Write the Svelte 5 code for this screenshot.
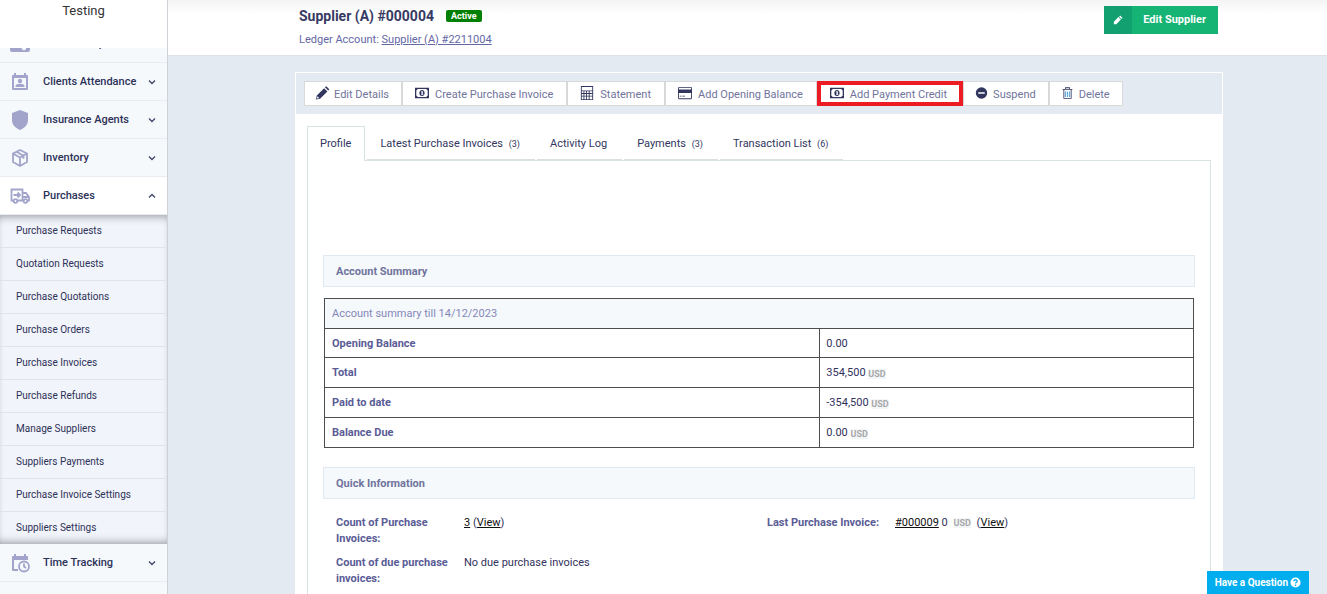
<script>
  let activeTab = $state('Profile');
  let openMenu = $state('Purchases');

  const menu = [
    { name: 'Memberships', icon: 'card', cut: true },
    { name: 'Clients Attendance', icon: 'attendance' },
    { name: 'Insurance Agents', icon: 'shield' },
    { name: 'Inventory', icon: 'box' },
    {
      name: 'Purchases',
      icon: 'truck',
      links: [
        'Purchase Requests',
        'Quotation Requests',
        'Purchase Quotations',
        'Purchase Orders',
        'Purchase Invoices',
        'Purchase Refunds',
        'Manage Suppliers',
        'Suppliers Payments',
        'Purchase Invoice Settings',
        'Suppliers Settings'
      ]
    },
    { name: 'Time Tracking', icon: 'calendar' }
  ];

  const actions = [
    { name: 'Edit Details', icon: 'pencil' },
    { name: 'Create Purchase Invoice', icon: 'money', wide: true },
    { name: 'Statement', icon: 'calc', wide: true },
    { name: 'Add Opening Balance', icon: 'credit', wide: true },
    { name: 'Add Payment Credit', icon: 'money', wide: true, marked: true },
    { name: 'Suspend', icon: 'minus' },
    { name: 'Delete', icon: 'trash' }
  ];

  const tabs = [
    { name: 'Profile' },
    { name: 'Latest Purchase Invoices', count: 3 },
    { name: 'Activity Log' },
    { name: 'Payments', count: 3 },
    { name: 'Transaction List', count: 6 }
  ];

  const summary = [
    { label: 'Opening Balance', value: '0.00' },
    { label: 'Total', value: '354,500', currency: 'USD' },
    { label: 'Paid to date', value: '-354,500', currency: 'USD' },
    { label: 'Balance Due', value: '0.00', currency: 'USD' }
  ];
</script>

{#snippet menuIcon(name)}
  <svg class="menu-icon" viewBox="0 0 20 20" aria-hidden="true">
    {#if name === 'card'}
      <path fill-rule="evenodd" d="M0 3h20v13a2 2 0 0 1-2 2H2a2 2 0 0 1-2-2zM12 13a2 2 0 0 0 4 2v-2z" />
    {:else if name === 'attendance'}
      <path fill-rule="evenodd" d="M4 1h2v2h8V1h2v2h1a1 1 0 0 1 1 1v13a1 1 0 0 1-1 1H3a1 1 0 0 1-1-1V4a1 1 0 0 1 1-1h1zM4 6v10h12V6z" />
      <circle cx="10" cy="9" r="2.2" />
      <path d="M5.500 15v-1c0-1.500 2.500-2.300 4.500-2.300s4.500.8 4.500 2.300v1z" />
    {:else if name === 'shield'}
      <path d="M10 0l8 3v7c0 5-3.500 8-8 10-4.500-2-8-5-8-10V3z" />
    {:else if name === 'box'}
      <path class="line" d="M10 2l7 3.500v8.500l-7 4-7-4V5.500zM3 5.500l7 4 7-4M10 9.500V18M6.500 3.800l7 3.900v3" />
    {:else if name === 'truck'}
      <path class="line" d="M3 14.500H1.500v-11h11v11H8M12.500 7h3.500l3 4v3.500h-1M12.500 11H19M3.500 9h6M7.500 6.500L10 9l-2.500 2.500" />
      <circle class="line" cx="5.500" cy="15" r="1.800" />
      <circle class="line" cx="15.500" cy="15" r="1.800" />
    {:else}
      <path fill-rule="evenodd" d="M4 1h2v2h8V1h2v2h1a1 1 0 0 1 1 1v3h-2V6H4v10h4v2H3a1 1 0 0 1-1-1V4a1 1 0 0 1 1-1h1z" />
      <path d="M3 4h14v3H3z" />
      <circle class="line" cx="14" cy="13.500" r="5" />
      <path class="line" d="M14 10.500v3l2 1.500" />
    {/if}
  </svg>
{/snippet}

{#snippet actionIcon(name, wide)}
  <svg class="action-icon" class:wide viewBox="0 0 16 16" aria-hidden="true">
    {#if name === 'pencil'}
      <path fill-rule="evenodd" d="M1 11l9-9 4 4-9 9-5 1zM2 12l-1 3 3-1zM11 1l1-1h1l3 3v1l-1 1z" />
    {:else if name === 'money'}
      <path fill-rule="evenodd" d="M0 2h16v12H0zM3 3.500A2 2 0 0 1 1.500 5v6A2 2 0 0 1 3 12.500h10a2 2 0 0 1 1.500-1.500V5A2 2 0 0 1 13 3.500z" />
      <path fill-rule="evenodd" d="M8 4.500c4 0 4 7 0 7s-4-7 0-7zM7 6v1h.5v2H7v1h2.500V9H9V6z" />
    {:else if name === 'calc'}
      <path fill-rule="evenodd" d="M1 0h14v16H1zM2 1v4h12V1zM2 6v2h2V6zM5 6v2h2V6zM8 6v2h2V6zM11 6v2h3V6zM2 9v2h2V9zM5 9v2h2V9zM8 9v2h2V9zM11 9v2h3V9zM2 12v3h2v-3zM5 12v3h2v-3zM8 12v3h2v-3zM11 12v3h3v-3z" />
    {:else if name === 'credit'}
      <path fill-rule="evenodd" d="M1 1h14l1 1v12l-1 1H1l-1-1V2zM1 2v2h14V2zM1 8v6h14V8zM2 11h2v1H2zM5 11h3v1H5z" />
    {:else if name === 'minus'}
      <path fill-rule="evenodd" d="M8 1a7 7 0 1 1 0 14A7 7 0 0 1 8 1zM4 7v2h8V7z" />
    {:else}
      <path class="bin" d="M5.500 6v7M8 6v7M10.500 6v7" />
      <path fill-rule="evenodd" d="M5 3V1h6v2h3v1h-1v11H3V4H2V3zM6 2v1h4V2zM4 4v10h8V4z" />
    {/if}
  </svg>
{/snippet}

<div class="layout">
  <aside class="sidebar">
    <div class="account">Testing</div>
    <nav>
      {#each menu as item}
        <div class="menu-row" class:cut={item.cut}>
          <button
            class="menu-item"
            class:open={openMenu === item.name}
            onclick={() => (openMenu = openMenu === item.name ? '' : item.name)}
          >
            {@render menuIcon(item.icon)}
            <span>{item.name}</span>
            <svg class="chevron" viewBox="0 0 8 8" aria-hidden="true">
              <path d="M1 2.500l3 3 3-3" />
            </svg>
          </button>
        </div>
        {#if item.links && openMenu === item.name}
          <div class="submenu">
            {#each item.links as link}
              <a href="#top">{link}</a>
            {/each}
          </div>
        {/if}
      {/each}
    </nav>
  </aside>

  <main>
    <header class="page-head">
      <div>
        <div class="title-row">
          <h1>Supplier (A) #000004</h1>
          <span class="badge">Active</span>
        </div>
        <p class="ledger">Ledger Account: <a href="#top">Supplier (A) #2211004</a></p>
      </div>
      <button class="edit-btn">
        <span class="edit-icon">
          <svg viewBox="0 0 12 12" aria-hidden="true">
            <path d="M1 8l5.500-5.500 3 3L4 11H1zM7.300 1.700L8.500.5l3 3-1.200 1.200z" />
          </svg>
        </span>
        <span class="edit-text">Edit Supplier</span>
      </button>
    </header>

    <section class="panel">
      <div class="toolbar">
        {#each actions as action}
          <button class="action" class:roomy={action.wide} class:marked={action.marked}>
            {@render actionIcon(action.icon, action.wide)}
            {action.name}
          </button>
        {/each}
      </div>

      <div class="panel-body">
        <div class="tabs" role="tablist">
          {#each tabs as tab}
            <button
              class="tab"
              role="tab"
              aria-selected={activeTab === tab.name}
              class:active={activeTab === tab.name}
              onclick={() => (activeTab = tab.name)}
            >
              {tab.name}
              {#if tab.count}<small>({tab.count})</small>{/if}
            </button>
          {/each}
        </div>

        <div class="tab-pane">
          <h2>Account Summary</h2>
          <table>
            <colgroup>
              <col class="col-label" />
              <col />
            </colgroup>
            <thead>
              <tr><th colspan="2">Account summary till 14/12/2023</th></tr>
            </thead>
            <tbody>
              {#each summary as row}
                <tr>
                  <th scope="row">{row.label}</th>
                  <td>{row.value} {#if row.currency}<span class="currency low">{row.currency}</span>{/if}</td>
                </tr>
              {/each}
            </tbody>
          </table>

          <h2>Quick Information</h2>
          <div class="info">
            <dl>
              <dt>Count of Purchase Invoices:</dt>
              <dd><a href="#top">3</a> (<a href="#top">View</a>)</dd>
              <dt>Count of due purchase invoices:</dt>
              <dd>No due purchase invoices</dd>
            </dl>
            <dl>
              <dt>Last Purchase Invoice:</dt>
              <dd>
                <a href="#top">#000009</a> 0 <span class="currency spaced">USD</span> (<a href="#top">View</a>)
              </dd>
            </dl>
          </div>
        </div>
      </div>
    </section>
  </main>

  <button class="help">
    Have a Question
    <svg viewBox="0 0 12 12" aria-hidden="true">
      <circle cx="6" cy="6" r="5.500" fill="#fff" />
      <path d="M4.200 4.700c0-2.300 3.600-2.300 3.600-.2C7.800 5.800 6 5.800 6 7.200M6 8.300v1.500" fill="none" stroke="#00aeef" stroke-width="1.500" />
    </svg>
  </button>
</div>

<style>
  :global(body) {
    background: #e4eaf2;
  }

  .layout,
  .layout button {
    font-family: Roboto, "Liberation Sans", sans-serif;
  }

  .layout {
    display: flex;
    height: 100vh;
    overflow: hidden;
    font-size: 11px;
    line-height: 16px;
    color: #32325d;
  }

  .layout * {
    box-sizing: border-box;
  }

  button {
    margin: 0;
    padding: 0;
    border: 0;
    background: none;
    cursor: pointer;
    color: inherit;
  }

  /* sidebar */
  .sidebar {
    flex: none;
    width: 168px;
    border-right: 1px solid #cfd1d6;
    background: #f5f9fc;
  }

  .account {
    height: 48px;
    padding-top: 3px;
    background: #fff;
    color: #333;
    font-size: 13px;
    text-align: center;
  }

  .menu-row.cut {
    display: flex;
    flex-direction: column;
    justify-content: flex-end;
    height: 15px;
    overflow: hidden;
  }

  .menu-item {
    flex: none;
    display: flex;
    align-items: center;
    width: 100%;
    height: 38px;
    padding: 0 11px 0 10px;
    border-bottom: 1px solid #e9edf2;
    color: #2d3158;
    font-size: 11px;
    font-weight: 500;
    text-align: left;
  }

  .menu-item span {
    flex: 1;
    padding-left: 13px;
  }

  .menu-item.open {
    background: #fff;
  }

  .menu-icon {
    width: 20px;
    height: 20px;
    fill: #a2a4cb;
  }

  .line {
    fill: none;
    stroke: #a2a4cb;
    stroke-width: 1.8;
  }

  .chevron {
    width: 8px;
    height: 8px;
    fill: none;
    stroke: #44486c;
    stroke-width: 1.4;
  }

  .open .chevron {
    transform: rotate(180deg);
  }

  .submenu {
    background: #f1f4fa;
    box-shadow:
      inset 0 9px 8px -7px rgba(0, 0, 0, 0.3),
      inset 0 -9px 8px -7px rgba(0, 0, 0, 0.3),
      inset 0 0 6px rgba(0, 0, 0, 0.08);
  }

  .submenu a {
    display: block;
    height: 33px;
    padding: 0 16px;
    border-bottom: 1px solid #dfe4ec;
    color: #2d3158;
    font-size: 10px;
    line-height: 32px;
    text-decoration: none;
  }

  .submenu a:last-child {
    height: 32px;
    border-bottom: 0;
  }

  /* header */
  main {
    flex: 1;
    min-width: 0;
  }

  .page-head {
    display: flex;
    justify-content: space-between;
    align-items: flex-start;
    height: 56px;
    padding: 6px 109px 0 131px;
    border-bottom: 1px solid #dce2e8;
    background: linear-gradient(#f4f4f4, #fff 14px);
  }

  .title-row {
    display: flex;
    align-items: center;
    gap: 12px;
    height: 20px;
  }

  h1 {
    margin: 0;
    font-size: 14px;
    font-weight: 700;
    color: #363a63;
  }

  .badge {
    height: 12px;
    padding: 0 5px;
    border-radius: 2px;
    background: #008000;
    color: #fff;
    font-size: 9px;
    font-weight: 700;
    line-height: 12px;
  }

  .ledger {
    margin: 6px 0 0;
    color: #6567a5;
  }

  .ledger a {
    color: inherit;
  }

  .edit-btn {
    display: flex;
    height: 28px;
    background: #15b374;
    color: #fff;
    font-size: 11px;
    font-weight: 700;
    line-height: 28px;
  }

  .edit-icon {
    display: flex;
    align-items: center;
    justify-content: center;
    width: 28px;
    height: 28px;
    background: #13a071;
  }

  .edit-icon svg {
    width: 10px;
    height: 10px;
    fill: #fff;
  }

  .edit-text {
    padding: 0 12px 0 11px;
  }

  /* panel */
  .panel {
    height: 100%;
    margin: 16px 104px 0 127px;
    border: 1px solid #fff;
    background: #fff;
  }

  .toolbar {
    display: flex;
    height: 41px;
    padding: 8px;
    background: #e4eaf2;
  }

  .action {
    display: flex;
    align-items: center;
    gap: 5px;
    height: 25px;
    padding: 2px 12px 0 11px;
    border: 1px solid #d9d9d9;
    background: #fff;
    color: #70749c;
    font-size: 11px;
    white-space: nowrap;
  }

  .action.roomy {
    padding-right: 13px;
  }

  .action.marked {
    padding: 2px 12px 0 8px;
    border: 4px solid #ed1c24;
  }

  .action-icon {
    width: 13px;
    height: 14px;
    margin-bottom: 4px;
    fill: #32365e;
  }

  .action-icon.wide {
    width: 16px;
  }

  .bin {
    fill: none;
    stroke: #63aedb;
    stroke-width: 1.5;
  }

  .panel-body {
    padding: 12px 11px 0;
  }

  .tabs {
    display: flex;
    gap: 2px;
    height: 34px;
  }

  .tab {
    padding: 2px 15px 0 13px;
    border-bottom: 1px solid #d9e0de;
    color: #32365e;
    font-size: 11px;
    white-space: nowrap;
  }

  .tab small {
    padding-left: 3px;
    font-size: 9px;
  }

  .tab.active {
    position: relative;
    height: 35px;
    padding: 0 13px 1px 12px;
    border: 1px solid #d9e3e2;
    border-bottom: 0;
    background: #fff;
  }

  .tab-pane {
    height: 600px;
    padding: 94px 15px 0;
    border: 1px solid #d9e3e2;
  }

  h2 {
    margin: 0;
    padding: 2px 12px 0;
    border: 1px solid #e1e9f3;
    background: #f5f9fc;
    color: #70749c;
    font-size: 11px;
    font-weight: 700;
    line-height: 28px;
  }

  table {
    width: calc(100% - 2px);
    margin: 11px 1px 19px;
    border-collapse: collapse;
    table-layout: fixed;
  }

  .col-label {
    width: 57%;
  }

  th,
  td {
    height: 30px;
    padding: 1px 6px 0;
    border: 1px solid #4d4d4d;
    text-align: left;
  }

  tbody tr:first-child > * {
    height: 29px;
  }

  th {
    padding-left: 7px;
    color: #5a5c96;
    font-weight: 700;
  }

  thead th {
    padding-top: 0;
    background: #f5f9fc;
    color: #8587b8;
    font-weight: 400;
  }

  .currency {
    background: #f3f6f9;
    color: #a8a8a8;
    font-size: 9px;
    font-weight: 700;
    line-height: 10px;
  }

  .low {
    vertical-align: -1px;
  }

  .spaced {
    margin: 0 3px;
  }

  .info {
    display: grid;
    grid-template-columns: 431px 1fr;
    padding: 16px 13px 0;
  }

  dl {
    display: grid;
    grid-template-columns: 128px 1fr;
    align-content: start;
    row-gap: 8px;
    margin: 0;
  }

  dt {
    padding-right: 8px;
    color: #5a5c96;
    font-weight: 700;
  }

  dd {
    margin: 0;
  }

  dd a {
    color: #111;
  }

  .help {
    position: fixed;
    right: 18px;
    bottom: 0;
    display: flex;
    align-items: center;
    gap: 2px;
    height: 23px;
    padding: 0 8px;
    background: #00aeef;
    color: #fff;
    font-size: 10px;
    font-weight: 700;
  }

  .help svg {
    width: 11px;
    height: 11px;
  }
</style>
